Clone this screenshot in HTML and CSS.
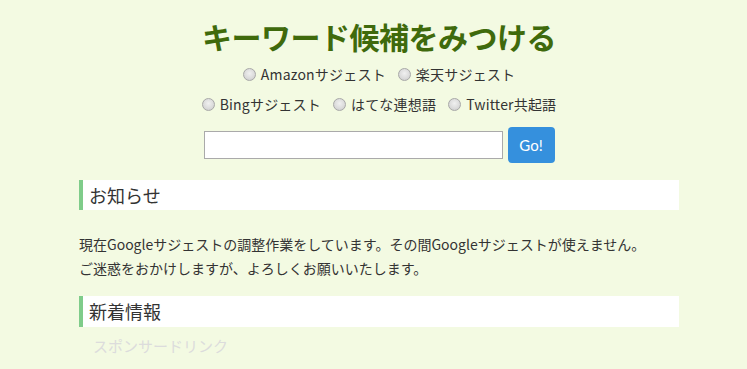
FILE: index.html
```html
<!DOCTYPE html>
<html lang="ja">
<head>
<meta charset="utf-8">
<link rel="stylesheet" href="styles.css">
</head>
<body>
<div class="wrap">
  <div class="container">
    <h1 class="title">キーワード候補をみつける</h1>
    <div class="radios">
      <label class="opt"><input type="radio" name="s"> Amazonサジェスト</label>
      <label class="opt"><input type="radio" name="s"> 楽天サジェスト</label>
    </div>
    <div class="radios row2">
      <label class="opt"><input type="radio" name="s"> Bingサジェスト</label>
      <label class="opt"><input type="radio" name="s"> はてな連想語</label>
      <label class="opt"><input type="radio" name="s"> Twitter共起語</label>
    </div>
    <form class="search">
      <input type="text" class="field">
      <button type="button" class="go">Go!</button>
    </form>
    <h2 class="head">お知らせ</h2>
    <p class="notice">現在Googleサジェストの調整作業をしています。その間Googleサジェストが使えません。<br>ご迷惑をおかけしますが、よろしくお願いいたします。</p>
    <h2 class="head head2">新着情報</h2>
    <div class="sponsor">スポンサードリンク</div>
  </div>
</div>
</body>
</html>
```
FILE: styles.css
```css
html, body {
  margin: 0;
  padding: 0;
  background: #f3fae2;
}
body {
  font-family: "Noto Sans CJK JP", "Noto Sans", sans-serif;
  color: #333;
}
.wrap {
  padding-left: 11px;
}
.container {
  width: 600px;
  margin: 0 auto;
}
.title {
  margin: 0;
  padding-top: 16px;
  text-align: center;
  font-size: 30px;
  line-height: 40px;
  font-weight: 700;
  color: #3f6a0c;
  letter-spacing: -0.5px;
}
.radios {
  display: flex;
  justify-content: center;
  gap: 12px;
  font-size: 14px;
  line-height: 30px;
  margin-top: 3px;
  letter-spacing: 0.2px;
}
.radios.row2 {
  margin-top: 0;
}
.opt {
  display: flex;
  align-items: center;
}
.opt input {
  appearance: none;
  -webkit-appearance: none;
  margin: 0 5px 0 0;
  width: 13px;
  height: 13px;
  border-radius: 50%;
  border: 1px solid #a8a8a8;
  background: radial-gradient(circle at 50% 40%, #f0f0f0 0%, #dcdcdc 55%, #c8c8c8 100%);
  box-sizing: border-box;
}
.search {
  display: flex;
  justify-content: center;
  align-items: center;
  gap: 5px;
  margin: 8px 0 0;
}
.field {
  width: 299px;
  height: 28px;
  box-sizing: border-box;
  border: 1px solid #aaa;
  background: #fff;
  margin: 0;
}
.go {
  width: 47px;
  height: 36px;
  border: none;
  border-radius: 4px;
  background: #3590dd;
  color: #fff;
  font-family: "Lato", "Noto Sans", sans-serif;
  font-size: 15px;
  padding: 0;
}
.head {
  margin: 17px 0 0;
  background: #fff;
  border-left: 4px solid #7fcc8a;
  padding: 0 6px;
  font-size: 18px;
  font-weight: 400;
  line-height: 30px;
  color: #333;
}
.notice {
  margin: 22px 0 0;
  font-size: 14px;
  line-height: 24px;
}
.head2 {
  margin-top: 16px;
  line-height: 31px;
}
.sponsor {
  margin: 8px 0 0 14px;
  font-size: 15px;
  line-height: 22px;
  color: #dcdcdc;
}
```
